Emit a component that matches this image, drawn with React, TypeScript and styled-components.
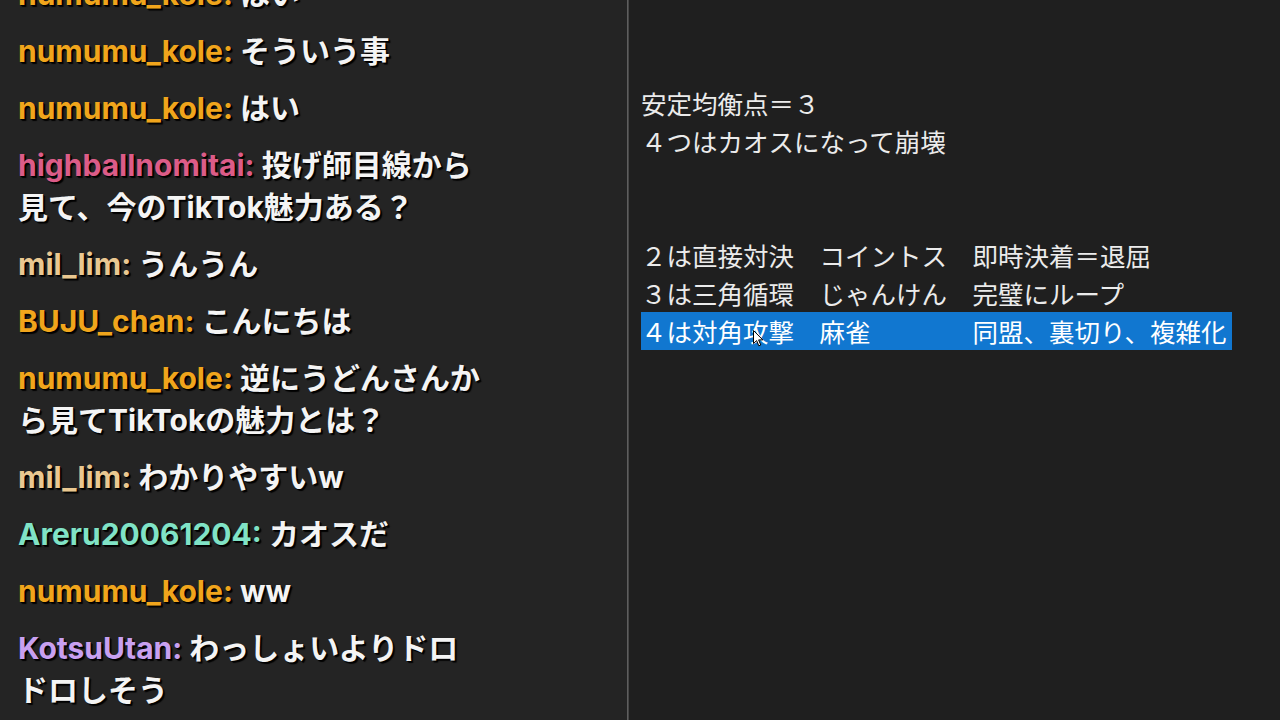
import styled, { createGlobalStyle } from 'styled-components';

const GlobalStyle = createGlobalStyle`
  html, body {
    margin: 0;
    padding: 0;
    background: #1f1f1f;
  }
  #root {
    width: 1280px;
    height: 720px;
    overflow: hidden;
  }
`;

type ChatMessage = {
  user: string;
  color: string;
  text: string;
};

const NAME_COLORS = {
  orange: '#f0a51c',
  pink: '#dc5c88',
  tan: '#eac891',
  teal: '#80e3c6',
  lavender: '#c8a0f0',
};

// line breaks follow where the overlay wrapped
const MESSAGES: ChatMessage[] = [
  { user: 'numumu_kole', color: NAME_COLORS.orange, text: 'はい' },
  { user: 'numumu_kole', color: NAME_COLORS.orange, text: 'そういう事' },
  { user: 'numumu_kole', color: NAME_COLORS.orange, text: 'はい' },
  {
    user: 'highballnomitai',
    color: NAME_COLORS.pink,
    text: '投げ師目線から\n見て、今のTikTok魅力ある？',
  },
  { user: 'mil_lim', color: NAME_COLORS.tan, text: 'うんうん' },
  { user: 'BUJU_chan', color: NAME_COLORS.orange, text: 'こんにちは' },
  {
    user: 'numumu_kole',
    color: NAME_COLORS.orange,
    text: '逆にうどんさんか\nら見てTikTokの魅力とは？',
  },
  { user: 'mil_lim', color: NAME_COLORS.tan, text: 'わかりやすいw' },
  { user: 'Areru20061204', color: NAME_COLORS.teal, text: 'カオスだ' },
  { user: 'numumu_kole', color: NAME_COLORS.orange, text: 'ww' },
  {
    user: 'KotsuUtan',
    color: NAME_COLORS.lavender,
    text: 'わっしょいよりドロ\nドロしそう',
  },
];

// full-width spaces keep the columns lined up, as typed in the note
const NOTE_LINES = [
  '安定均衡点＝３',
  '４つはカオスになって崩壊',
  '',
  '',
  '２は直接対決　コイントス　即時決着＝退屈',
  '３は三角循環　じゃんけん　完璧にループ',
  '４は対角攻撃　麻雀　　　　同盟、裏切り、複雑化',
];

const SELECTED_LINE = 6;

const Screen = styled.div`
  display: flex;
  width: 1280px;
  height: 720px;
`;

const ChatPanel = styled.div`
  width: 627px;
  height: 720px;
  flex-shrink: 0;
  background: #242424;
  display: flex;
  flex-direction: column;
  justify-content: flex-end;
  gap: 15px;
  padding: 0 0 9px 18px;
  box-sizing: border-box;
  overflow: hidden;
`;

const ChatLine = styled.div`
  width: 520px;
  font-family: Inter, 'Noto Sans CJK JP', sans-serif;
  font-size: 30px;
  font-weight: 700;
  line-height: 42px;
  color: #f4f4f4;
  text-shadow: 2px 2px 1px rgba(0, 0, 0, 0.95), 1px 1px 0 #000;
  white-space: pre-wrap;
  flex-shrink: 0;
`;

const UserName = styled.span<{ $color: string }>`
  color: ${(p) => p.$color};
`;

const Divider = styled.div`
  width: 2px;
  flex-shrink: 0;
  background: linear-gradient(to right, #6a6a6a, #3a3a3a);
`;

const NotePanel = styled.div`
  position: relative;
  flex: 1;
  background: #1f1f1f;
  padding: 84px 0 0 12px;
  box-sizing: border-box;
`;

const NoteLine = styled.div<{ $selected?: boolean }>`
  width: fit-content;
  height: 38px;
  padding-right: ${(p) => (p.$selected ? '6px' : '0')};
  background: ${(p) => (p.$selected ? '#1177d0' : 'transparent')};
  font-family: 'Noto Sans CJK JP', sans-serif;
  font-size: 25.5px;
  line-height: 38px;
  color: ${(p) => (p.$selected ? '#ffffff' : '#ebebeb')};
  white-space: pre;
`;

const Pointer = styled.svg`
  position: absolute;
  left: 124px;
  top: 330px;
  width: 11px;
  height: 17px;
`;

export default function App() {
  return (
    <Screen>
      <GlobalStyle />
      <ChatPanel>
        {MESSAGES.map((msg, i) => (
          <ChatLine key={i}>
            <UserName $color={msg.color}>{msg.user}:</UserName> {msg.text}
          </ChatLine>
        ))}
      </ChatPanel>
      <Divider />
      <NotePanel>
        {NOTE_LINES.map((line, i) => (
          <NoteLine key={i} $selected={i === SELECTED_LINE}>
            {line}
          </NoteLine>
        ))}
        <Pointer viewBox="0 0 11 17">
          <path
            d="M0.5 0.5 L0.5 13.5 L3.6 10.6 L5.8 15.8 L7.8 15 L5.6 9.9 L9.8 9.9 Z"
            fill="#ffffff"
            stroke="#000000"
            strokeWidth="1"
            strokeLinejoin="round"
          />
        </Pointer>
      </NotePanel>
    </Screen>
  );
}
